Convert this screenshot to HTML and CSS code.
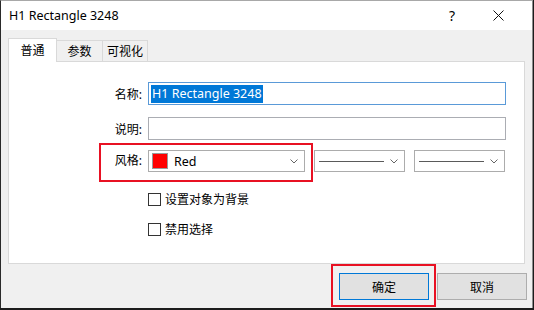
FILE: index.html
```html
<!DOCTYPE html>
<html>
<head>
<meta charset="utf-8">
<link rel="stylesheet" href="styles.css">
</head>
<body>
<div class="window">
  <div class="titlebar">
    <span class="title">H1 Rectangle 3248</span>
    <div class="title-btns">
      <span class="help">?</span>
      <span class="close"><svg width="11" height="11" viewBox="0 0 11 11"><path d="M0.5 0.5 L10.5 10.5 M10.5 0.5 L0.5 10.5" stroke="#111" stroke-width="1" fill="none"/></svg></span>
    </div>
  </div>
  <div class="content">
    <div class="tabs">
      <div class="tab active">普通</div>
      <div class="tab">参数</div>
      <div class="tab">可视化</div>
    </div>
    <div class="panel">
      <div class="row row-name">
        <span class="lbl">名称:</span>
        <div class="input focused"><span class="sel">H1 Rectangle 3248</span></div>
      </div>
      <div class="row row-desc">
        <span class="lbl">说明:</span>
        <div class="input"></div>
      </div>
      <div class="row row-style">
        <div class="hl-group">
          <span class="lbl">风格:</span>
          <div class="combo combo-color">
            <span class="swatch"></span>
            <span class="combo-text">Red</span>
            <svg class="chev" width="8" height="5" viewBox="0 0 8 5"><path d="M0.5 0.5 L4 4 L7.5 0.5" stroke="#666" stroke-width="1" fill="none"/></svg>
          </div>
        </div>
        <div class="combo combo-line">
          <span class="line"></span>
          <svg class="chev" width="8" height="5" viewBox="0 0 8 5"><path d="M0.5 0.5 L4 4 L7.5 0.5" stroke="#666" stroke-width="1" fill="none"/></svg>
        </div>
        <div class="combo combo-line">
          <span class="line"></span>
          <svg class="chev" width="8" height="5" viewBox="0 0 8 5"><path d="M0.5 0.5 L4 4 L7.5 0.5" stroke="#666" stroke-width="1" fill="none"/></svg>
        </div>
      </div>
      <label class="check first"><span class="box"></span><span>设置对象为背景</span></label>
      <label class="check"><span class="box"></span><span>禁用选择</span></label>
    </div>
    <div class="footer">
      <div class="hl-btn"><button class="btn default">确定</button></div>
      <button class="btn cancel">取消</button>
    </div>
  </div>
</div>
</body>
</html>
```

FILE: styles.css
```css
html, body {
  margin: 0;
  padding: 0;
  background: #1c1c1c;
  width: 534px;
  height: 310px;
  overflow: hidden;
}
body {
  font-family: "Noto Sans", "Noto Sans CJK SC", sans-serif;
  font-size: 12px;
  color: #000;
}
.window {
  width: 533px;
  height: 308px;
  box-sizing: border-box;
  background: #f0f0f0;
  border-left: 1px solid #2a2a2a;
  border-top: 1px solid #a8a8a8;
  border-right: 1px solid #8c8c8c;
  display: flex;
  flex-direction: column;
}
.titlebar {
  height: 29px;
  flex: none;
  background: #fff;
  display: flex;
  align-items: center;
  padding-left: 8px;
}
.title {
  font-size: 12.5px;
  color: #000;
}
.title-btns {
  margin-left: auto;
  display: flex;
  align-items: center;
}
.help {
  width: 12px;
  text-align: center;
  font-size: 14px;
  margin-right: 35px;
}
.close {
  display: flex;
  margin-right: 28px;
}
.content {
  padding: 8px 7px 0 7px;
  display: flex;
  flex-direction: column;
}
.tabs {
  display: flex;
  align-items: flex-end;
  height: 23px;
  position: relative;
  z-index: 1;
}
.tab {
  box-sizing: border-box;
  height: 21px;
  padding: 0;
  white-space: nowrap;
  border: 1px solid #d9d9d9;
  border-bottom: none;
  background: #f0f0f0;
  display: flex;
  align-items: center;
  justify-content: center;
  color: #000;
}
.tab + .tab {
  margin-left: -1px;
}
.tab:nth-child(2) { width: 47px; }
.tab:nth-child(3) { width: 46px; }
.tab.active {
  width: 49px;
  height: 24px;
  margin-bottom: -1px;
  background: #fff;
  padding-bottom: 2px;
}
.panel {
  box-sizing: border-box;
  height: 203px;
  background: #fff;
  border: 1px solid #d9d9d9;
  padding-top: 20px;
  display: flex;
  flex-direction: column;
}
.row {
  display: flex;
  align-items: center;
}
.lbl {
  width: 41px;
  flex: none;
  text-align: right;
  color: #000;
}
.row-name, .row-desc {
  padding-left: 92px;
  padding-right: 18px;
  gap: 6px;
}
.row-desc {
  margin-top: 12px;
}
.input {
  flex: 1;
  height: 23px;
  box-sizing: border-box;
  border: 1px solid #abadb3;
  background: #fff;
  display: flex;
  align-items: center;
  padding-left: 2px;
}
.input.focused {
  border-color: #5a9ad8;
}
.sel {
  background: #0078d7;
  color: #fff;
  font-size: 12.5px;
  line-height: 18px;
  padding: 0 1px;
}
.row-style {
  margin-top: 3px;
  padding-left: 90px;
  align-items: flex-start;
}
.hl-group {
  display: flex;
  align-items: flex-start;
  gap: 6px;
  border: 2px solid #e81123;
  padding: 5px 6px 8px 0;
  height: 39px;
  box-sizing: border-box;
}
.hl-group .lbl {
  line-height: 22px;
}
.combo {
  box-sizing: border-box;
  height: 22px;
  border: 1px solid #acacac;
  background: #fff;
  display: flex;
  align-items: center;
}
.combo-color {
  width: 157px;
  padding-left: 3px;
}
.swatch {
  width: 14px;
  height: 14px;
  background: #ff0000;
  border: 1px solid #9a9a9a;
  flex: none;
}
.combo-text {
  margin-left: 6px;
  font-size: 12.5px;
}
.chev {
  margin-left: auto;
  margin-right: 6px;
}
.combo-line {
  width: 91px;
  margin-top: 7px;
  margin-left: 1px;
  padding-left: 4px;
}
.combo-line + .combo-line {
  margin-left: 9px;
}
.line {
  width: 65px;
  height: 1px;
  background: #5a5a5a;
}
.check {
  display: flex;
  align-items: center;
  gap: 4px;
  padding-left: 139px;
  height: 14px;
  margin-top: 16px;
}
.check.first {
  margin-top: 10px;
}
.box {
  width: 13px;
  height: 13px;
  box-sizing: border-box;
  border: 1px solid #333;
  background: #fff;
  flex: none;
}
.footer {
  display: flex;
  justify-content: flex-end;
  align-items: flex-start;
  margin-right: -2px;
}
.hl-btn {
  border: 2px solid #e81123;
  padding: 7px 5px 5px 6px;
  height: 43px;
  box-sizing: border-box;
}
.btn {
  width: 90px;
  height: 27px;
  box-sizing: border-box;
  background: #e1e1e1;
  border: 1px solid #adadad;
  font-family: "Noto Sans CJK SC", "Noto Sans", sans-serif;
  font-size: 12px;
  color: #000;
  padding: 0;
  margin: 0;
}
.btn.default {
  border: 1px solid #0078d7;
  box-shadow: inset 0 0 0 1px #e1e1e1;
}
.btn.cancel {
  margin-top: 9px;
  margin-left: 1px;
}
```
